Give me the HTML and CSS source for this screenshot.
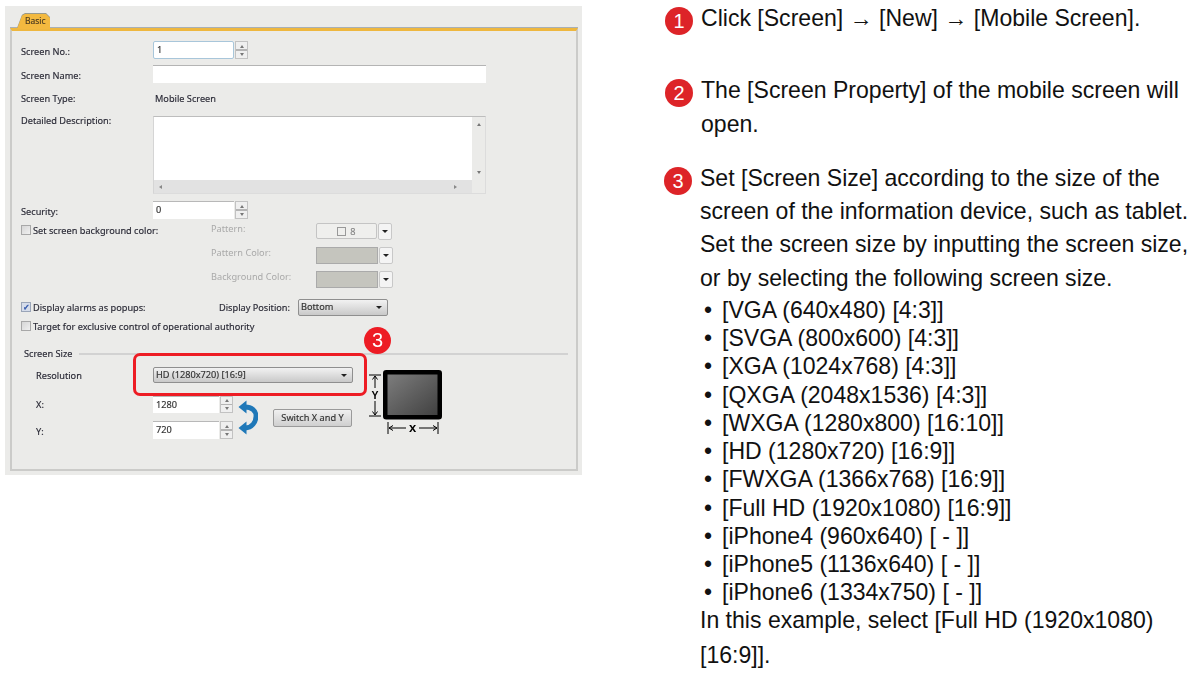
FILE: index.html
```html
<!DOCTYPE html>
<html lang="en">
<head>
<meta charset="utf-8">
<title>Mobile Screen</title>
<link rel="stylesheet" href="styles.css">
</head>
<body>
<div class="page">
  <section class="panel">
    <div class="tabbar"><span class="tab">Basic</span></div>
    <div class="sheet">
      <div class="row r1"><label class="lbl">Screen No.:</label><div class="num focus"><span class="val">1</span></div><div class="spin"><i class="up"></i><i class="dn"></i></div></div>
      <div class="row r2"><label class="lbl">Screen Name:</label><div class="wide"></div></div>
      <div class="row r3"><label class="lbl">Screen Type:</label><span class="plain">Mobile Screen</span></div>
      <div class="row r4"><label class="lbl top">Detailed Description:</label>
        <div class="memo">
          <div class="memo-text"></div>
          <div class="vbar"><i class="up"></i><i class="dn"></i></div>
          <div class="hbar"><i class="lf"></i><i class="rt"></i></div>
        </div>
      </div>
      <div class="row r5"><label class="lbl">Security:</label><div class="num"><span class="val">0</span></div><div class="spin"><i class="up"></i><i class="dn"></i></div></div>
      <div class="bgset">
        <label class="check"><span class="box"></span>Set screen background color:</label>
        <div class="bgopts">
          <div class="opt"><span class="dim">Pattern:</span><div class="pat"><span class="pbox"></span>8</div><span class="drop"></span></div>
          <div class="opt"><span class="dim">Pattern Color:</span><div class="swatch"></div><span class="drop"></span></div>
          <div class="opt"><span class="dim">Background Color:</span><div class="swatch"></div><span class="drop"></span></div>
        </div>
      </div>
      <div class="row r6"><label class="check"><span class="box on">✓</span>Display alarms as popups:</label><span class="dp">Display Position:</span><div class="select bottom">Bottom</div></div>
      <div class="row r7"><label class="check"><span class="box"></span>Target for exclusive control of operational authority</label></div>
      <div class="legend"><span>Screen Size</span><hr></div>
      <div class="sizes">
        <div class="sizes-left">
          <div class="row r8"><label class="lbl sub">Resolution</label><div class="select res">HD (1280x720) [16:9]</div></div>
          <div class="xy">
            <div class="xy-rows">
              <div class="row rx"><label class="lbl sub">X:</label><div class="num short"><span class="val">1280</span></div><div class="spin"><i class="up"></i><i class="dn"></i></div></div>
              <div class="row ry"><label class="lbl sub">Y:</label><div class="num short"><span class="val">720</span></div><div class="spin"><i class="up"></i><i class="dn"></i></div></div>
            </div>
            <svg class="swap" viewBox="0 0 20 36" width="20" height="36" aria-hidden="true">
              <path d="M7 7C14 7 18 11 18 16C18 22 14 28 7 28" fill="none" stroke="#1f78b8" stroke-width="4.800"/>
              <path d="M0.500 7L8.500 0.500V13.500Z M0.500 28L8.500 21.500V34.500Z" fill="#1f78b8"/>
            </svg>
            <div class="btn">Switch X and Y</div>
          </div>
        </div>
        <svg class="dims" viewBox="0 0 74 68" width="74" height="68" aria-hidden="true">
          <defs><linearGradient id="scr" x1="0" y1="0" x2="1" y2="1"><stop offset="0" stop-color="#808080"/><stop offset="1" stop-color="#3e3e3e"/></linearGradient></defs>
          <rect x="16.250" y="2.250" width="54.500" height="45" fill="url(#scr)" stroke="#000" stroke-width="4.500" rx="1"/>
          <path d="M0 5H12M0 46H12M6 6V18M6 31V45M3.500 9.500L6 6L8.500 9.500M3.500 41.500L6 45L8.500 41.500" fill="none" stroke="#000" stroke-width="1"/>
          <path d="M19 52V64M69 52V64M20 58H37M50 58H68M24 55.500L20 58L24 60.500M64 55.500L68 58L64 60.500" fill="none" stroke="#000" stroke-width="1"/>
          <text class="dimtxt" x="6" y="29" text-anchor="middle">Y</text>
          <text class="dimtxt big" x="43.500" y="62" text-anchor="middle">x</text>
        </svg>
      </div>
    </div>
    <div class="redbox"></div>
    <span class="mark">3</span>
  </section>

  <section class="steps">
    <div class="step s1"><span class="badge">1</span><p>Click [Screen] → [New] → [Mobile Screen].</p></div>
    <div class="step s2"><span class="badge">2</span><p>The [Screen Property] of the mobile screen will open.</p></div>
    <div class="step s3"><span class="badge">3</span>
      <div class="body">
        <p>Set [Screen Size] according to the size of the screen of the information device, such as tablet. Set the screen size by inputting the screen size, or by selecting the following screen size.</p>
        <ul>
          <li>[VGA (640x480) [4:3]]</li>
          <li>[SVGA (800x600) [4:3]]</li>
          <li>[XGA (1024x768) [4:3]]</li>
          <li>[QXGA (2048x1536) [4:3]]</li>
          <li>[WXGA (1280x800) [16:10]]</li>
          <li>[HD (1280x720) [16:9]]</li>
          <li>[FWXGA (1366x768) [16:9]]</li>
          <li>[Full HD (1920x1080) [16:9]]</li>
          <li>[iPhone4 (960x640) [ - ]]</li>
          <li>[iPhone5 (1136x640) [ - ]]</li>
          <li>[iPhone6 (1334x750) [ - ]]</li>
        </ul>
        <p class="last">In this example, select [Full HD (1920x1080) [16:9]].</p>
      </div>
    </div>
  </section>
</div>
</body>
</html>
```
FILE: styles.css
```css
* { box-sizing: border-box; }
html, body { margin: 0; padding: 0; background: #fff; }
body { width: 1194px; height: 675px; overflow: hidden; }
.page { display: flex; align-items: flex-start; height: 675px; padding-left: 5px; }

/* dialog */
.panel {
  position: relative;
  width: 577px; height: 469px; margin-top: 6px;
  background: #ebebe9;
  padding: 8px 4px 4px 5px;
  font: 9.200px "Noto Sans", sans-serif;
  color: #2a2a36;
  -webkit-text-stroke: .15px currentColor;
  filter: blur(.3px);
}
.tabbar { height: 14px; padding-left: 7px; display: flex; filter: drop-shadow(0 -1px 0 #9a9a8a); }
.tab {
  width: 33px; height: 15px; padding: 1px 0 0 8px;
  background: #f3b93f;
  clip-path: polygon(0 100%, 5px 12%, 8px 0, calc(100% - 4px) 0, 100% 4px, 100% 100%);
  color: #4a3a20;
  font-size: 8.500px;
}
.sheet {
  height: 443px;
  border: 2px solid #cbcbc9; border-top: 3px solid #eeb73f;
  padding: 10px 8px 0 9px;
  box-shadow: 0 -1px 0 #a9b0b5;
}
.row { display: flex; align-items: center; height: 18px; }
.lbl { width: 132px; flex: none; padding-top: 3px; }
.lbl.top { align-self: flex-start; padding-top: 0; margin-top: -2px; }
.lbl.sub { padding: 0 0 0 15px; }
.r2 { margin-top: 6px; }
.r3 { margin-top: 5px; }
.r4 { margin-top: 10px; height: 78px; }
.r5 { margin-top: 7px; }

.num {
  width: 81px; height: 18px; background: #fff;
  border-top: 1px solid #b8b8b8;
  padding: 0 0 2px 3px; display: flex; align-items: center;
}
.num.focus { border: 1px solid #a8c6da; border-radius: 2px; }
.num.short { width: 66px; }
.rx .num.short { height: 17px; }
.val { color: #333; }
.spin {
  width: 13px; height: 18px; margin-left: 1px;
  border: 1px solid #c2c2c2;
  background: linear-gradient(#efefef 0 46%, #b4b4b4 46% 54%, #efefef 54%);
  display: flex; flex-direction: column; justify-content: space-around; align-items: center;
}
.up, .dn, .lf, .rt { display: block; width: 0; height: 0; border-style: solid; border-color: transparent; }
.up { border-width: 0 2.500px 3px; border-bottom-color: #777; }
.dn { border-width: 3px 2.500px 0; border-top-color: #777; }
.lf { border-width: 2.500px 3px 2.500px 0; border-right-color: #888; }
.rt { border-width: 2.500px 0 2.500px 3px; border-left-color: #888; }

.wide { width: 333px; height: 18px; background: #fff; border-top: 1px solid #b4b4b4; }
.plain { padding: 3px 0 0 2px; }

.memo {
  width: 333px; height: 78px;
  display: grid; grid-template-columns: 1fr 13px; grid-template-rows: 1fr 13px;
  border-top: 1px solid #bdbdbd; border-left: 1px solid #d5d5d5; border-right: 1px solid #dcdcdc; border-bottom: 1px solid #dcdcdc;
}
.memo-text { background: #fff; }
.vbar { display: flex; flex-direction: column; justify-content: space-between; align-items: center; padding: 6px 0; }
.hbar { background: #e2e2e2; display: flex; justify-content: space-between; align-items: center; padding: 0 15px 0 5px; grid-column: 1; }

.bgset { display: flex; height: 72px; }
.check { display: flex; align-items: center; gap: 2px; height: 18px; }
.bgset .check { width: 190px; flex: none; margin-top: 2px; }
.box {
  width: 10px; height: 10px; flex: none;
  background: linear-gradient(135deg, #d6d6d6, #f0f0f0); border: 1px solid #a8a8a8;
  font-size: 8px; line-height: 8px; text-align: center; color: #3f62b0; font-weight: 700;
}
.box.on { background: #d5dcea; border-color: #9aa5b8; }
.bgopts { display: flex; flex-direction: column; }
.opt { display: flex; align-items: center; height: 24px; }
.dim { width: 105px; color: #a9a9a9; flex: none; padding-bottom: 6px; -webkit-text-stroke: 0; }
.pat {
  width: 61px; height: 16px; background: #efefed;
  border: 1px solid #c4c4c4; border-radius: 2px;
  display: flex; align-items: center; justify-content: center; gap: 4px; color: #888;
}
.pbox { width: 9px; height: 9px; border: 1px solid #999; }
.swatch { width: 62px; height: 17px; background: #c5c5be; border: 1px solid #aaa; border-left-width: 1.500px; border-top-width: 1.500px; }
.drop {
  width: 14px; height: 17px; margin-left: 1px; flex: none;
  background: #f4f4f4; border: 1px solid #c8c8c8; border-radius: 2px;
  display: flex; align-items: center; justify-content: center;
}
.drop::after { content: ""; border-style: solid; border-width: 3px 3px 0; border-color: #222 transparent transparent; }
.r6 { margin-top: 7px; }
.r6 .check { width: 198px; flex: none; }
.dp { width: 79px; flex: none; }
.r7 { margin-top: 1px; }

.select {
  position: relative; height: 17px; padding: 0 0 1px 2px;
  display: flex; align-items: center;
  background: linear-gradient(#f2f2f2, #c9c9c9);
  border: 1px solid #8f8f8f; border-radius: 2px; color: #333;
}
.select::after {
  content: ""; position: absolute; right: 5px; top: 6px;
  border-style: solid; border-width: 3px 3px 0; border-color: #222 transparent transparent;
}
.select.bottom { width: 90px; }
.select.res { width: 200px; height: 16px; padding-left: 2px; }

.legend { display: flex; align-items: center; height: 18px; margin-top: 9px; padding-left: 3px; gap: 7px; }
.legend hr { flex: 1; height: 2px; margin: 2px 0 0; border: 0; background: #d2d2d2; }
.sizes { display: flex; align-items: flex-start; }
.sizes-left { width: 348px; flex: none; }
.r8 { height: 16px; margin-top: 5px; }
.xy { display: flex; align-items: center; margin-top: 13px; }
.xy-rows { width: 217px; flex: none; }
.rx { height: 17px; }
.ry { margin-top: 8px; }
.ry .lbl.sub { padding-top: 2px; }
.rx .spin { height: 17px; }
.swap { flex: none; margin-top: 1px; }
.btn {
  width: 79px; height: 18px; margin-left: 15px; flex: none;
  background: linear-gradient(#f0f0f0, #cfcfcf);
  border: 1px solid #9a9a9a; border-radius: 2px;
  display: flex; align-items: center; justify-content: center; color: #333; white-space: nowrap;
}
.dims { flex: none; margin: 8px 0 0 0; }
.dimtxt { font: bold 10.500px "Liberation Sans", sans-serif; fill: #000; stroke: none; -webkit-text-stroke: 0; }
.dimtxt.big { font-size: 13px; }

.redbox {
  position: absolute; left: 128px; top: 347px; width: 234px; height: 43px;
  border: 3.500px solid #ed1c24; border-radius: 7px;
}
.mark {
  position: absolute; left: 359px; top: 321px; width: 27px; height: 27px;
  border-radius: 50%; background: #ed1c24; color: #fff; -webkit-text-stroke: 0;
  font: 20px/27px "Liberation Sans", sans-serif; text-align: center;
}

/* instructions */
.steps {
  width: 529px; flex: none; margin-left: 83px; padding-top: 2px;
  font: 23.050px/33.300px "Liberation Sans", Arial, sans-serif;
  color: #111;
}
.steps p { margin: 0; }
.step { display: flex; }
.s2 { margin-top: 39px; }
.s3 { margin-top: 21px; }
.badge {
  width: 28px; height: 28px; flex: none; margin: 5px 8px 0 0;
  border-radius: 50%; background: #dd2428; color: #fff;
  font-size: 20px; line-height: 29px; text-align: center;
}
.s3 .badge { margin-left: -1px; }
.step > p { flex: 1; }
ul { margin: 1px 0 0; padding: 0; list-style: none; line-height: 28.200px; }
li { display: flex; white-space: nowrap; }
li::before { content: "•"; width: 22px; padding-left: 4px; flex: none; box-sizing: border-box; }
.steps .last { margin-top: -3px; line-height: 35px; }
.body { flex: 1; }
```
